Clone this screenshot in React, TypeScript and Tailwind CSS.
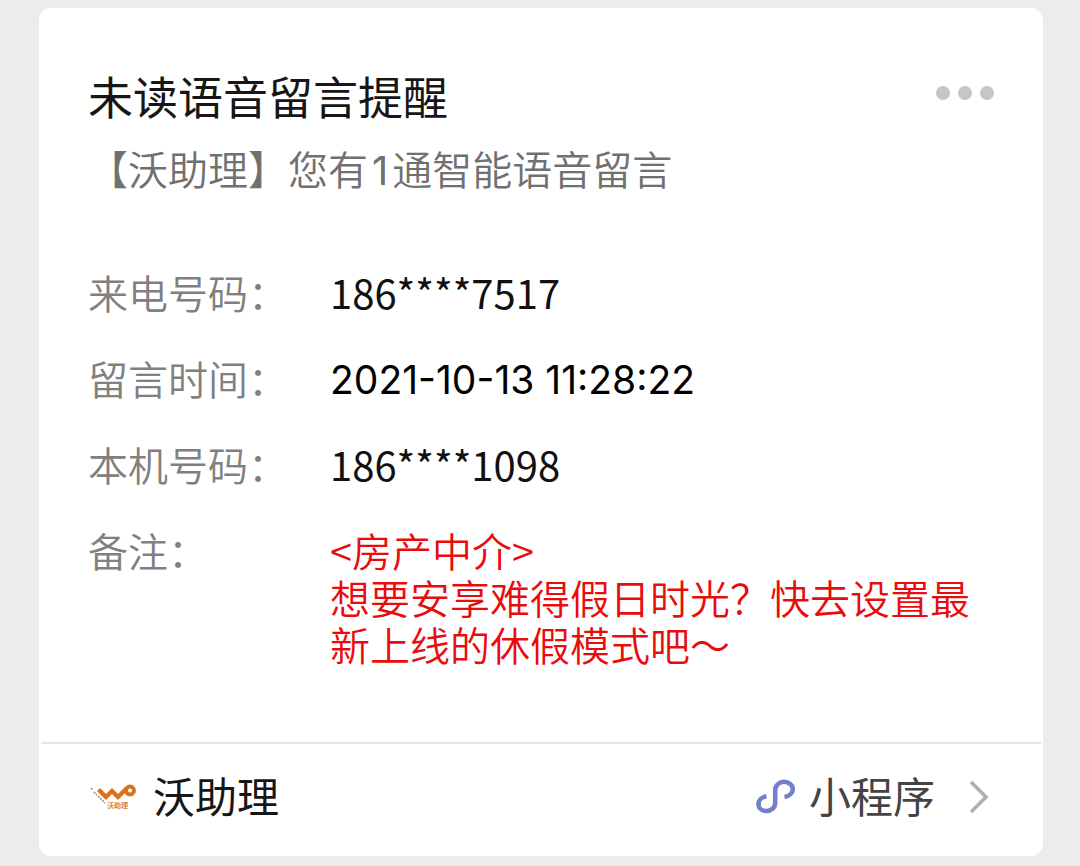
import React from "react";

const rows = [
  { label: "来电号码：", value: "186****7517", face: "text-[40px] text-[#111111]" },
  { label: "留言时间：", value: "2021-10-13 11:28:22", face: "font-['Inter','Noto_Sans_CJK_SC',sans-serif] pt-[2px] text-[39px] text-black" },
  { label: "本机号码：", value: "186****1098", face: "text-[40px] text-[#111111]" },
];

const remark = "<房产中介>\n想要安享难得假日时光？快去设置最新上线的休假模式吧～";

function WoLogo() {
  return (
    <svg className="h-7 w-12 shrink-0" viewBox="0 0 48 28" fill="none" aria-hidden="true">
      <path d="M2 5 L4 7 M5 9 L8 12 M9 13 L16 20" stroke="#b08a6a" strokeWidth="1.6" strokeDasharray="2 1" />
      <path d="M9.5 6.5 L17 14 L23 8 L29 14 L37.5 5.5" stroke="#d9731c" strokeWidth="4.4" strokeLinejoin="miter" />
      <circle cx="41" cy="7.5" r="4" stroke="#d9731c" strokeWidth="3.8" />
      <text x="18" y="25" fontSize="7" fontWeight="700" fill="#de8340">沃助理</text>
    </svg>
  );
}

function MiniProgramIcon() {
  return (
    <svg className="h-10 w-10 shrink-0" viewBox="0 0 40 40" fill="none" aria-hidden="true">
      <path d="M11.5 19.2 C6.5 20 3.5 23.4 3.5 27.2 C3.5 31.2 7 34 11.5 34 C16 34 20.2 30.8 20.2 26 V13 C20.2 8.2 24.4 4.8 29 4.8 C34 4.8 37.8 8 37.8 12 C37.8 16 34.5 19.2 29.5 20" stroke="#7480cc" strokeWidth="4.6" />
    </svg>
  );
}

export default function App() {
  return (
    <div className="min-h-screen bg-[#ececec] pt-2 pr-[37px] pb-[10px] pl-[39px] font-['Noto_Sans_CJK_SC',sans-serif]">
      <main className="overflow-hidden rounded-xl bg-white">
        <section className="px-[49px] pt-[58px] pb-[74px]">
          <header className="flex items-start justify-between">
            <h1 className="text-[45px] leading-[60px] text-[#161616]">未读语音留言提醒</h1>
            <button type="button" aria-label="更多" className="mt-5 flex gap-2">
              <span className="size-[14px] rounded-full bg-[#c6c6c6]" />
              <span className="size-[14px] rounded-full bg-[#c6c6c6]" />
              <span className="size-[14px] rounded-full bg-[#c6c6c6]" />
            </button>
          </header>
          <p className="mt-3 text-[40px] leading-[60px] font-[350] text-[#707070]">
            【沃助理】您有<span className="mx-1 font-['Inter',sans-serif] font-normal">1</span>通智能语音留言
          </p>
          <dl className="mt-[61px] grid grid-cols-[242px_1fr] gap-y-[26px] text-[40px] leading-[60px]">
            {rows.map((r) => (
              <React.Fragment key={r.label}>
                <dt className="h-[60px] font-[350] text-[#808080]">{r.label}</dt>
                <dd className={`h-[60px] ${r.face}`}>{r.value}</dd>
              </React.Fragment>
            ))}
            <dt className="font-[350] text-[#808080]">备注：</dt>
            <dd className="pt-[7px] leading-[47px] font-[350] whitespace-pre-line text-[#ea0c0c]">{remark}</dd>
          </dl>
        </section>
        <a href="#mini" className="mx-[2px] flex h-[114px] items-center border-t-2 border-[#e6e6e6] pr-[50px] pb-[6px] pl-12 text-[42px]">
          <WoLogo />
          <span className="-mt-[6px] ml-4 text-[#161616]">沃助理</span>
          <span className="ml-auto flex items-center gap-[14px] text-[#444444]">
            <MiniProgramIcon />
            <span className="-mt-[6px]">小程序</span>
          </span>
          <svg className="ml-8 h-9 w-6" viewBox="0 0 24 36" fill="none" aria-hidden="true">
            <path d="M4 3 L19 18 L4 33" stroke="#b0b0b0" strokeWidth="3.6" />
          </svg>
        </a>
      </main>
    </div>
  );
}
